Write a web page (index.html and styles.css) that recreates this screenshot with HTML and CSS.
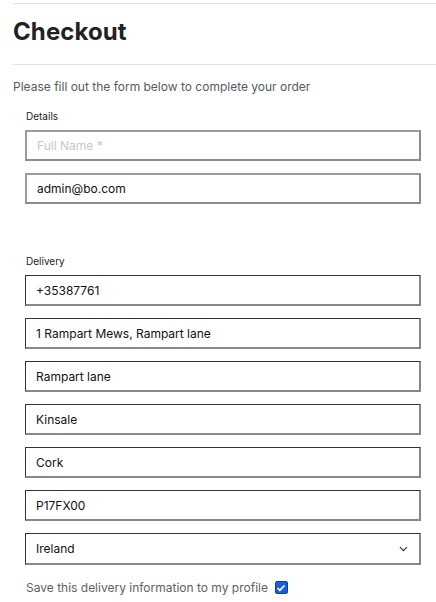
FILE: index.html
```html
<!DOCTYPE html>
<html>
<head>
<meta charset="utf-8">
<link rel="stylesheet" href="styles.css">
</head>
<body>
<div class="page">
  <header class="head">
    <h1 class="title">Checkout</h1>
  </header>
  <p class="intro">Please fill out the form below to complete your order</p>
  <form class="form">
    <section class="group">
      <div class="label">Details</div>
      <input class="field field-light" type="text" placeholder="Full Name *">
      <input class="field field-light" type="text" value="admin@bo.com">
    </section>
    <section class="group group-delivery">
      <div class="label">Delivery</div>
      <input class="field" type="text" value="+35387761">
      <input class="field" type="text" value="1 Rampart Mews, Rampart lane">
      <input class="field" type="text" value="Rampart lane">
      <input class="field" type="text" value="Kinsale">
      <input class="field" type="text" value="Cork">
      <input class="field" type="text" value="P17FX00">
      <div class="field select">
        <span>Ireland</span>
        <svg class="chev" width="9" height="6" viewBox="0 0 9 6"><path d="M1 1.2l3.5 3.5 3.5-3.5" fill="none" stroke="#333" stroke-width="1.2"/></svg>
      </div>
      <label class="save">Save this delivery information to my profile
        <span class="check"><svg width="10" height="8" viewBox="0 0 10 8"><path d="M1.5 4l2.3 2.3L8.5 1.5" fill="none" stroke="#fff" stroke-width="1.6"/></svg></span>
      </label>
    </section>
  </form>
</div>
</body>
</html>
```
FILE: styles.css
```css
html, body { margin: 0; padding: 0; background: #fff; }
body {
  font-family: "Inter", "Liberation Sans", sans-serif;
  color: #222;
  overflow: hidden;
}
.page { padding: 3px 0 0 13px; }
.head {
  border-top: 1px solid #e2e2e2;
  border-bottom: 1px solid #e2e2e2;
  height: 60px;
  display: flex;
  align-items: center;
}
.title {
  margin: 0;
  font-size: 24px;
  font-weight: 700;
  color: #222;
  letter-spacing: 0.1px;
  position: relative;
  top: -3px;
}
.intro {
  margin: 14px 0 0 0;
  font-size: 12px;
  color: #555b63;
  line-height: 16px;
}
.form { padding: 0 15px 0 12px; }
.group { display: flex; flex-direction: column; }
.label {
  font-size: 10px;
  color: #222;
  margin-top: 15px;
  height: 13px;
  line-height: 13px;
  margin-bottom: 7px;
  padding-left: 1px;
}
.group-delivery .label { margin-top: 39px; margin-bottom: 7px; }
.field {
  box-sizing: border-box;
  width: 396px;
  height: 31px;
  margin: 0 0 12px 0;
  padding: 0 10px;
  font-family: "Inter", "Liberation Sans", sans-serif;
  font-size: 12px;
  color: #111;
  background: #fff;
  border: 1px solid #333;
  border-right-color: #888;
  border-bottom-color: #888;
  border-width: 1px 2px 2px 1px;
  border-radius: 0;
  outline: none;
}
.field-light {
  border: 2px solid #8c8c8c;
  border-top-color: #9a9a9a;
  border-left-color: #9a9a9a;
}
.field::placeholder { color: #c3c8d0; }
.select {
  display: flex;
  align-items: center;
  justify-content: space-between;
  padding: 0 11px 0 10px;
  height: 32px;
}
.save {
  display: flex;
  align-items: center;
  gap: 7px;
  font-size: 12px;
  color: #5c6168;
  margin-top: 3px;
  padding-left: 1px;
}
.check {
  width: 13px;
  height: 13px;
  border-radius: 2px;
  background: #1a5fd6;
  border: 1px solid #0d3e96;
  box-sizing: border-box;
  display: inline-flex;
  align-items: center;
  justify-content: center;
}
```
